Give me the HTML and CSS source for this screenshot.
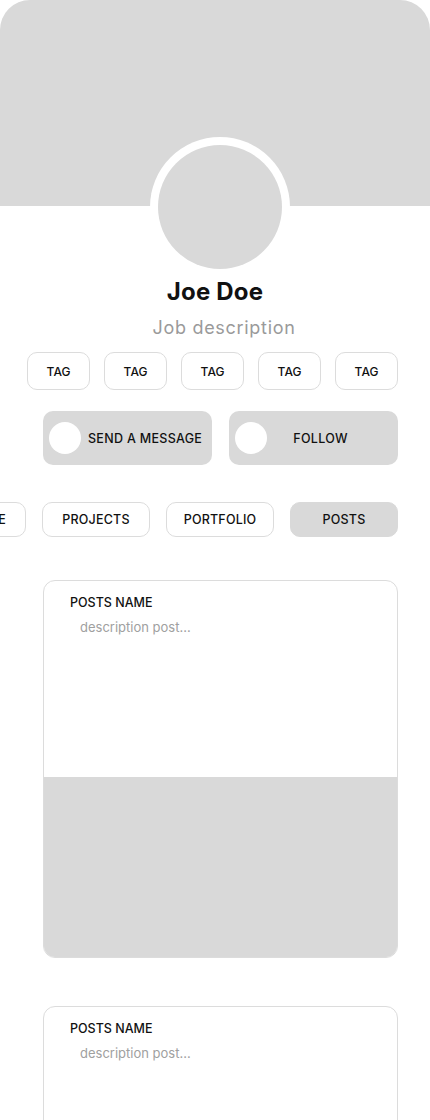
FILE: index.html
```html
<!DOCTYPE html>
<html>
<head>
<meta charset="utf-8">
<link rel="stylesheet" href="styles.css">
</head>
<body>
<div class="page">
  <div class="cover"></div>
  <div class="avatar-ring"><div class="avatar"></div></div>
  <h1 class="name">Joe Doe</h1>
  <p class="job">Job description</p>
  <div class="tags">
    <span class="tag">TAG</span>
    <span class="tag">TAG</span>
    <span class="tag">TAG</span>
    <span class="tag">TAG</span>
    <span class="tag">TAG</span>
  </div>
  <div class="actions">
    <button class="action"><span class="dot"></span><span class="action-label">SEND A MESSAGE</span></button>
    <button class="action"><span class="dot"></span><span class="action-label center">FOLLOW</span></button>
  </div>
  <div class="tabs">
    <span class="tab">ABOUT ME</span>
    <span class="tab">PROJECTS</span>
    <span class="tab">PORTFOLIO</span>
    <span class="tab active">POSTS</span>
  </div>
  <div class="posts">
    <div class="post">
      <div class="post-body">
        <div class="post-title">POSTS NAME</div>
        <div class="post-desc">description post...</div>
      </div>
      <div class="post-image"></div>
    </div>
    <div class="post">
      <div class="post-body">
        <div class="post-title">POSTS NAME</div>
        <div class="post-desc">description post...</div>
      </div>
      <div class="post-image"></div>
    </div>
  </div>
</div>
</body>
</html>
```
FILE: styles.css
```css
* { box-sizing: border-box; }
html, body { margin: 0; padding: 0; background: #fff; }
body { font-family: Inter, "Noto Sans", sans-serif; color: #111; }
.page { width: 430px; height: 1120px; overflow: hidden; }
.cover { height: 206px; background: #d9d9d9; border-radius: 30px 30px 0 0; }
.avatar-ring {
  width: 140px; height: 140px; margin: -69px 0 0 150px;
  border-radius: 50%; background: #fff; padding: 8px;
}
.avatar { width: 124px; height: 124px; border-radius: 50%; background: #d9d9d9; }
.name { margin: 0; text-align: center; font-size: 24px; font-weight: 700; line-height: 30px; letter-spacing: 0.2px; }
.job { margin: 9px 0 0; padding-left: 18px; text-align: center; font-size: 18px; line-height: 24px; color: #9a9a9a; letter-spacing: 0.7px; }
.tags { display: flex; gap: 14px; padding-left: 27px; margin-top: 12px; }
.tag {
  width: 63px; height: 38px; border: 1px solid #dcdcdc; border-radius: 10px;
  display: flex; align-items: center; justify-content: center;
  font-size: 12px; font-weight: 500;
}
.actions { display: flex; gap: 17px; padding-left: 43px; margin-top: 21px; }
.action {
  width: 169px; height: 54px; border: 0; border-radius: 10px; background: #d9d9d9;
  display: flex; align-items: center; padding: 0 6px; font-family: inherit; color: #111;
}
.dot { width: 32px; height: 32px; border-radius: 50%; background: #fff; flex: none; }
.action-label { font-size: 12.5px; font-weight: 500; margin-left: 7px; letter-spacing: 0.3px; }
.action-label.center { flex: 1; text-align: center; margin-left: 0; padding-right: 18px; }
.tabs { display: flex; justify-content: flex-end; gap: 16px; padding-right: 32px; margin-top: 37px; overflow: hidden; }
.tab {
  flex: none; width: 108px; height: 35px; border: 1px solid #dcdcdc; border-radius: 10px;
  display: flex; align-items: center; justify-content: center; font-size: 12.5px; font-weight: 500; letter-spacing: 0.2px;
}
.tab.active { background: #d9d9d9; border-color: #d9d9d9; }
.posts { display: flex; flex-direction: column; gap: 48px; padding-left: 43px; margin-top: 43px; }
.post { width: 355px; border: 1px solid #dcdcdc; border-radius: 12px; overflow: hidden; }
.post-body { height: 196px; padding: 14px 0 0 26px; }
.post-title { font-size: 12.5px; font-weight: 500; line-height: 16px; }
.post-desc { margin: 8px 0 0 10px; font-size: 13px; line-height: 16px; color: #a0a0a0; }
.post-image { height: 180px; background: #d9d9d9; }
```
